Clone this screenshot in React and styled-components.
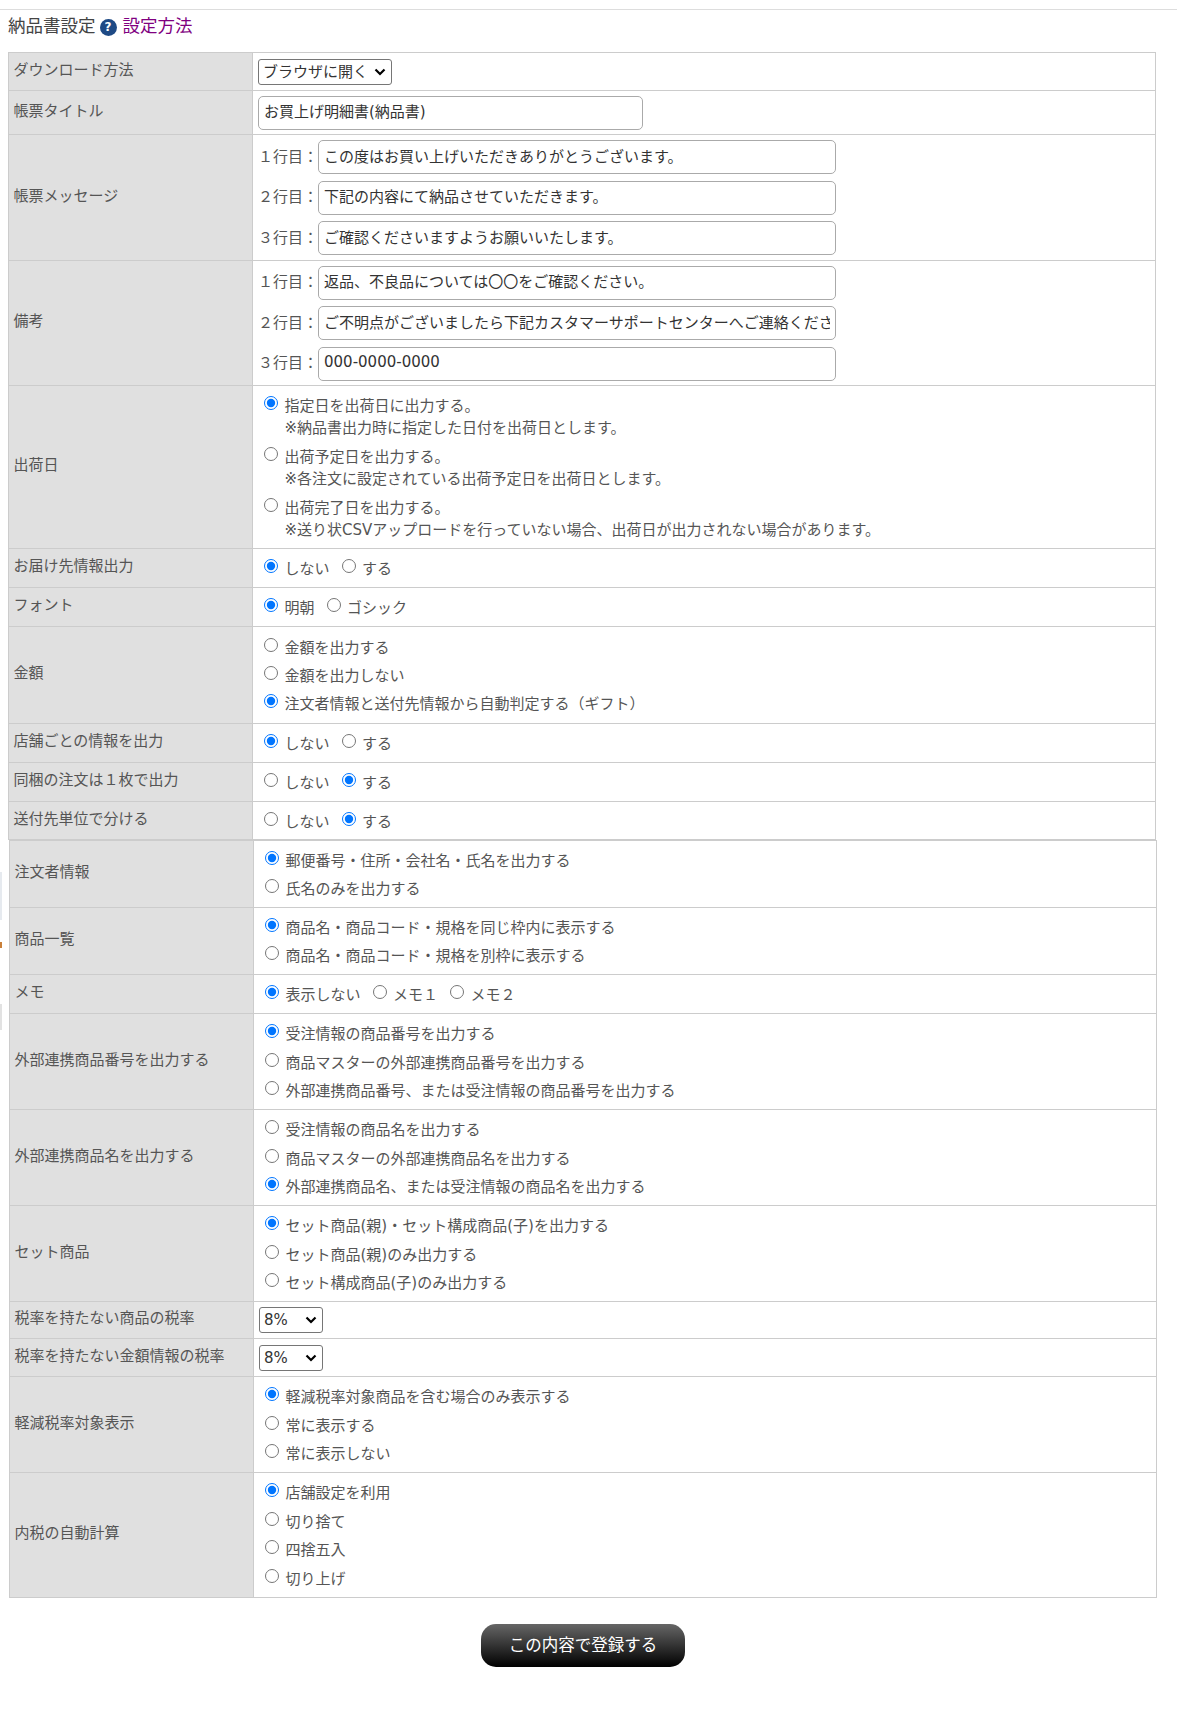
import styled, { createGlobalStyle } from "styled-components"

const chevron = encodeURIComponent(
  '<svg xmlns="http://www.w3.org/2000/svg" width="12" height="8" viewBox="0 0 12 8"><path d="M1.5 1.5 6 6l4.500-4.500" fill="none" stroke="#000" stroke-width="2.200"/></svg>'
)

const GlobalStyle = createGlobalStyle`
  body {
    margin: 0;
    background: #fff;
    color: #555;
    font-family: "DejaVu Sans", "Noto Sans CJK JP", sans-serif;
    font-size: 15px;
  }
  * {
    font-family: "DejaVu Sans", "Noto Sans CJK JP", sans-serif;
  }
`

const Page = styled.div`
  position: relative;
  height: 1709px;
  padding-top: 9px;
  box-sizing: border-box;
  overflow: hidden;
`
const TopRule = styled.div`
  height: 1px;
  background: #ddd;
`
const Header = styled.div`
  display: flex;
  align-items: center;
  height: 28px;
  margin: 0 0 14px 8px;
  font-size: 17.500px;
  color: #444;
`
const HelpIcon = styled.span`
  display: inline-flex;
  align-items: center;
  justify-content: center;
  width: 17px;
  height: 17px;
  margin: 6px 6px 0 4px;
  border-radius: 50%;
  background: #1e4a85;
  color: #fff;
  font-size: 12px;
  font-weight: 700;
`
const HelpLink = styled.a`
  color: #800080;
  text-decoration: none;
`
const Table = styled.table`
  width: 1148px;
  margin-left: ${(p) => p.$shift}px;
  border-collapse: collapse;
  table-layout: fixed;
  border: 1px solid #ccc;
`
const Label = styled.th`
  box-sizing: border-box;
  width: 244px;
  height: ${(p) => p.$height}px;
  padding: 0 5px 7px 4.500px;
  border: 1px solid #ccc;
  background: #e0e0e0;
  color: #555;
  font-weight: 400;
  text-align: left;
  vertical-align: middle;
`
const Cell = styled.td`
  box-sizing: border-box;
  padding: ${(p) => (p.$form ? "0 5px" : "2px 11px 0")};
  border: 1px solid #ccc;
  background: #fff;
  vertical-align: middle;
`
const FieldStack = styled.div`
  display: flex;
  flex-direction: column;
  gap: 6.500px;
`
const FieldRow = styled.div`
  display: flex;
  align-items: center;
`
const FieldName = styled.span`
  width: 60px;
  flex: none;
  padding-bottom: 4px;
  color: #555;
  white-space: nowrap;
`
const TextField = styled.input`
  box-sizing: border-box;
  width: ${(p) => p.$width}px;
  height: 34px;
  padding: 0 5px 4px;
  border: 1px solid #aaa;
  border-radius: 5px;
  background: #fff;
  color: #333;
  font-size: 15px;
  outline: none;
`
const Select = styled.select`
  box-sizing: border-box;
  display: block;
  width: ${(p) => p.$width}px;
  height: 26px;
  padding: 0 0 0 4px;
  border: 1px solid #767676;
  border-radius: 3px;
  appearance: none;
  background: #fff url("data:image/svg+xml,${chevron}") no-repeat right 5px center;
  color: #333;
  font-size: 15px;
`
const OptionStack = styled.div`
  display: flex;
  flex-direction: column;
  gap: ${(p) => p.$gap}px;
`
const OptionLine = styled.div`
  display: flex;
  gap: 12px;
`
const Choice = styled.label`
  display: inline-flex;
  align-items: flex-start;
  line-height: 22px;
  color: #555;
`
const Radio = styled.input.attrs({ type: "radio" })`
  flex: none;
  width: 14px;
  height: 14px;
  margin: 1px 6.500px 0 0;
  accent-color: #0075ff;
`
const Note = styled.span`
  display: block;
`
const Footer = styled.div`
  display: flex;
  justify-content: center;
  width: 1148px;
  margin: 26px 0 0 9px;
`
const SubmitButton = styled.button`
  width: 204px;
  height: 43px;
  padding-bottom: 5px;
  border: none;
  border-radius: 15px;
  background: linear-gradient(#666, #000);
  color: #fff;
  font-size: 16.500px;
  cursor: pointer;
`
const EdgeMark = styled.div`
  position: absolute;
  left: 0;
  top: ${(p) => p.$top}px;
  width: 2px;
  height: ${(p) => p.$height}px;
  background: ${(p) => p.$color};
`

const Options = ({ name, items, checked, inline, gap = 6.4 }) => {
  const choices = items.map((item, i) => {
    const text = Array.isArray(item) ? item[0] : item
    const note = Array.isArray(item) ? item[1] : null
    return (
      <Choice key={text}>
        <Radio name={name} defaultChecked={i === checked} />
        <span>
          {text}
          {note && <Note>{note}</Note>}
        </span>
      </Choice>
    )
  })
  return inline ? <OptionLine>{choices}</OptionLine> : <OptionStack $gap={gap}>{choices}</OptionStack>
}

const Fields = ({ values }) => (
  <FieldStack>
    {values.map((value, i) => (
      <FieldRow key={i}>
        <FieldName>{"１２３"[i]}行目：</FieldName>
        <TextField $width={518} defaultValue={value} />
      </FieldRow>
    ))}
  </FieldStack>
)

const Row = ({ title, height, form, children }) => (
  <tr>
    <Label $height={height}>{title}</Label>
    <Cell $form={form}>{children}</Cell>
  </tr>
)

const yesNo = ["しない", "する"]

const App = () => {
  return (
    <Page>
      <GlobalStyle />
      <EdgeMark $top={872} $height={48} $color="#e6eaef" />
      <EdgeMark $top={942} $height={6} $color="#c9803a" />
      <EdgeMark $top={1004} $height={26} $color="#e2e2e2" />
      <TopRule />
      <Header>
        納品書設定
        <HelpIcon>?</HelpIcon>
        <HelpLink href="#">設定方法</HelpLink>
      </Header>

      <Table $shift={8}>
        <tbody>
          <Row title="ダウンロード方法" height={38} form>
            <Select $width={134} defaultValue="browser">
              <option value="browser">ブラウザに開く</option>
            </Select>
          </Row>
          <Row title="帳票タイトル" height={44} form>
            <TextField $width={385} defaultValue="お買上げ明細書(納品書)" />
          </Row>
          <Row title="帳票メッセージ" height={126} form>
            <Fields
              values={[
                "この度はお買い上げいただきありがとうございます。",
                "下記の内容にて納品させていただきます。",
                "ご確認くださいますようお願いいたします。",
              ]}
            />
          </Row>
          <Row title="備考" height={125} form>
            <Fields
              values={[
                "返品、不良品については〇〇をご確認ください。",
                "ご不明点がございましたら下記カスタマーサポートセンターへご連絡ください。",
                "000-0000-0000",
              ]}
            />
          </Row>
          <Row title="出荷日" height={163}>
            <Options
              name="ship"
              checked={0}
              gap={7}
              items={[
                ["指定日を出荷日に出力する。", "※納品書出力時に指定した日付を出荷日とします。"],
                ["出荷予定日を出力する。", "※各注文に設定されている出荷予定日を出荷日とします。"],
                ["出荷完了日を出力する。", "※送り状CSVアップロードを行っていない場合、出荷日が出力されない場合があります。"],
              ]}
            />
          </Row>
          <Row title="お届け先情報出力" height={39}>
            <Options name="dest" checked={0} items={yesNo} inline />
          </Row>
          <Row title="フォント" height={39}>
            <Options name="font" checked={0} items={["明朝", "ゴシック"]} inline />
          </Row>
          <Row title="金額" height={97}>
            <Options
              name="price"
              checked={2}
              items={["金額を出力する", "金額を出力しない", "注文者情報と送付先情報から自動判定する（ギフト）"]}
            />
          </Row>
          <Row title="店舗ごとの情報を出力" height={39}>
            <Options name="shop" checked={0} items={yesNo} inline />
          </Row>
          <Row title="同梱の注文は１枚で出力" height={39}>
            <Options name="bundle" checked={1} items={yesNo} inline />
          </Row>
          <Row title="送付先単位で分ける" height={38}>
            <Options name="split" checked={1} items={yesNo} inline />
          </Row>
        </tbody>
      </Table>

      <Table $shift={9}>
        <tbody>
          <Row title="注文者情報" height={67}>
            <Options name="buyer" checked={0} items={["郵便番号・住所・会社名・氏名を出力する", "氏名のみを出力する"]} />
          </Row>
          <Row title="商品一覧" height={67}>
            <Options
              name="list"
              checked={0}
              items={["商品名・商品コード・規格を同じ枠内に表示する", "商品名・商品コード・規格を別枠に表示する"]}
            />
          </Row>
          <Row title="メモ" height={39}>
            <Options name="memo" checked={0} items={["表示しない", "メモ１", "メモ２"]} inline />
          </Row>
          <Row title="外部連携商品番号を出力する" height={96}>
            <Options
              name="extNo"
              checked={0}
              items={["受注情報の商品番号を出力する", "商品マスターの外部連携商品番号を出力する", "外部連携商品番号、または受注情報の商品番号を出力する"]}
            />
          </Row>
          <Row title="外部連携商品名を出力する" height={96}>
            <Options
              name="extName"
              checked={2}
              items={["受注情報の商品名を出力する", "商品マスターの外部連携商品名を出力する", "外部連携商品名、または受注情報の商品名を出力する"]}
            />
          </Row>
          <Row title="セット商品" height={96}>
            <Options
              name="set"
              checked={0}
              items={["セット商品(親)・セット構成商品(子)を出力する", "セット商品(親)のみ出力する", "セット構成商品(子)のみ出力する"]}
            />
          </Row>
          <Row title="税率を持たない商品の税率" height={37} form>
            <Select $width={64} defaultValue="8">
              <option value="8">8%</option>
              <option value="10">10%</option>
            </Select>
          </Row>
          <Row title="税率を持たない金額情報の税率" height={38} form>
            <Select $width={64} defaultValue="8">
              <option value="8">8%</option>
              <option value="10">10%</option>
            </Select>
          </Row>
          <Row title="軽減税率対象表示" height={96}>
            <Options name="reduced" checked={0} items={["軽減税率対象商品を含む場合のみ表示する", "常に表示する", "常に表示しない"]} />
          </Row>
          <Row title="内税の自動計算" height={125}>
            <Options name="tax" checked={0} items={["店舗設定を利用", "切り捨て", "四捨五入", "切り上げ"]} />
          </Row>
        </tbody>
      </Table>

      <Footer>
        <SubmitButton>この内容で登録する</SubmitButton>
      </Footer>
    </Page>
  )
}

export default App
